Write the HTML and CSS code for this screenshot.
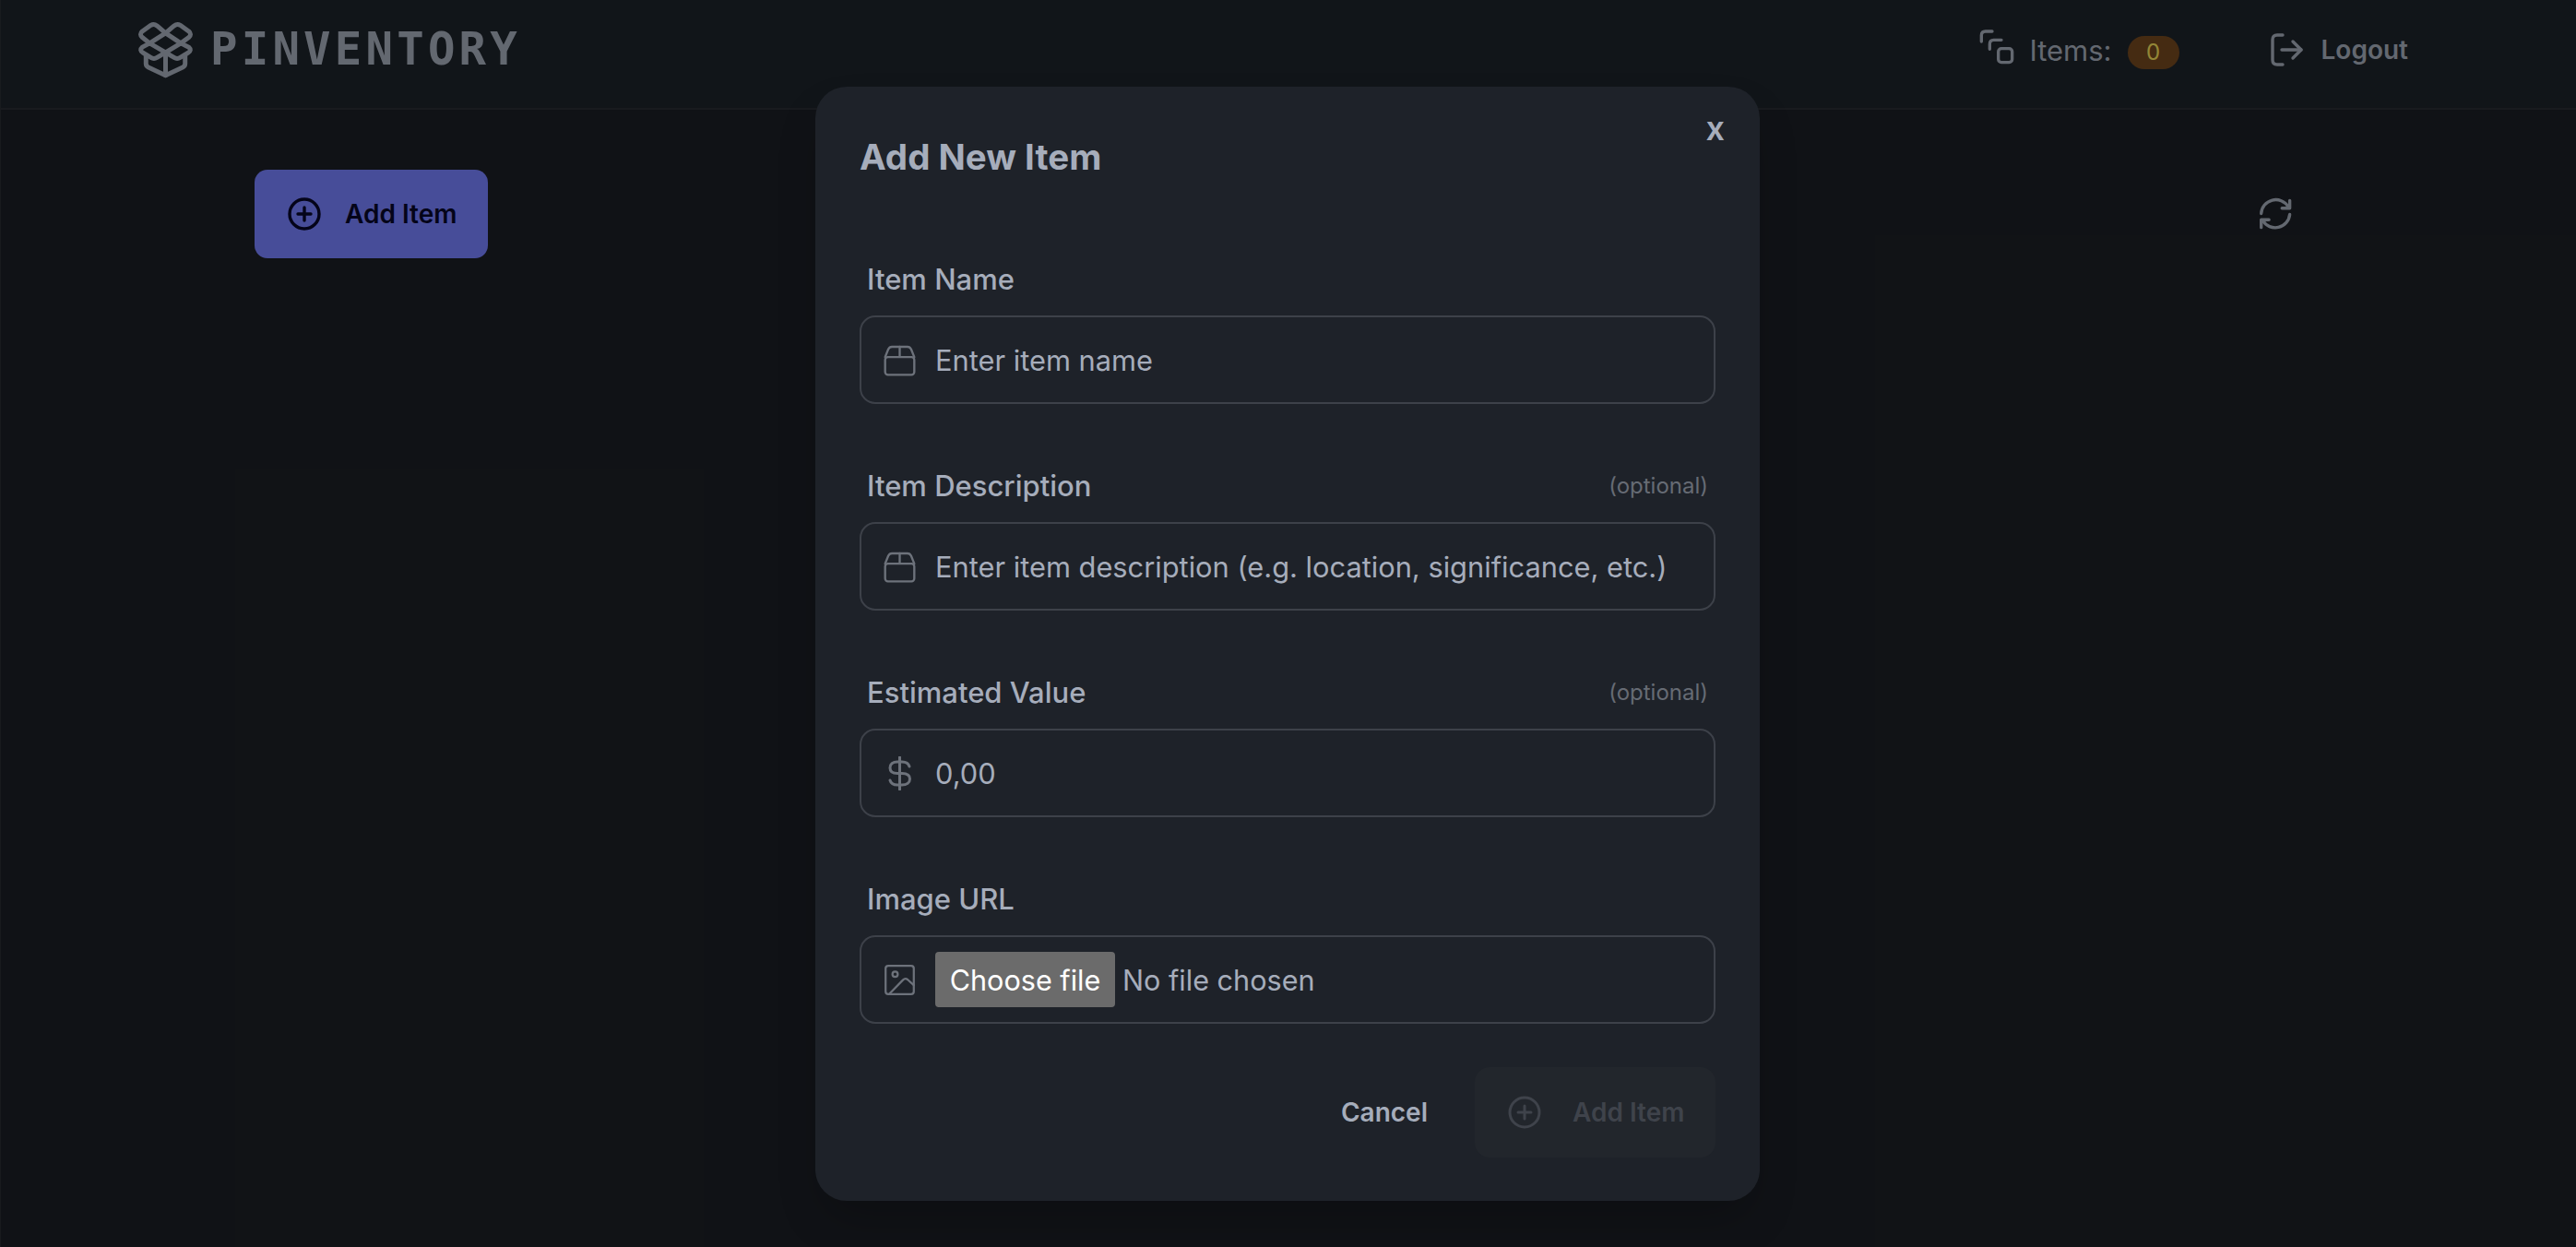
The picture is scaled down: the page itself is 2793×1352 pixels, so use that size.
FILE: index.html
```html
<!DOCTYPE html>
<html>
    <head>
        <meta charset="utf-8">
        <title>Pinventory</title>
        <link rel="stylesheet" href="styles.css">
    </head>
    <body>
        <header class="navbar">
            <div class="brand">
                <svg class="logo-icon" viewBox="25 20 190 190" fill="none" stroke="currentColor" stroke-width="15" stroke-linecap="round" stroke-linejoin="round">
                    <path d="M120 62 L170 95 L120 125 L68 95 Z"/>
                    <path d="M120 62 L92 38 Q82 30 72 36 L44 56 Q33 66 44 76 L68 95"/>
                    <path d="M120 62 L148 38 Q158 30 168 36 L196 56 Q207 66 196 76 L170 95"/>
                    <path d="M68 95 L44 108 Q33 118 46 126 L72 142 Q82 148 92 142 L120 125"/>
                    <path d="M170 95 L196 108 Q207 118 194 126 L168 142 Q158 148 148 142 L120 125"/>
                    <path d="M56 134 V162 Q56 170 64 174 L120 200 L176 174 Q184 170 184 162 V134"/>
                    <path d="M120 125 V200"/>
                </svg>
                <span class="logo-text">PINVENTORY</span>
            </div>
            <div class="nav-right">
                <div class="items-count">
                    <svg class="items-icon" viewBox="20 30 120 120" fill="none" stroke="currentColor" stroke-width="10" stroke-linecap="round">
                        <path d="M30 75 V55 Q30 42 43 42 H65"/>
                        <path d="M57 100 V83 Q57 70 70 70 H95"/>
                        <rect x="85" y="98" width="45" height="45" rx="10"/>
                    </svg>
                    <span class="items-label">Items:</span>
                    <span class="badge">0</span>
                </div>
                <div class="logout">
                    <svg class="logout-icon" viewBox="0 0 36 36" fill="none" stroke="currentColor" stroke-width="3.4" stroke-linecap="round" stroke-linejoin="round">
                        <path d="M13 2 H7 Q2 2 2 7 V29 Q2 34 7 34 H13"/>
                        <path d="M12 18 H33"/>
                        <path d="M24 9 L33 18 L24 27"/>
                    </svg>
                    <span>Logout</span>
                </div>
            </div>
        </header>

        <main class="content">
            <button class="btn-primary">
                <svg class="plus-icon" viewBox="0 0 36 36" fill="none" stroke="currentColor" stroke-width="3.4" stroke-linecap="round">
                    <circle cx="18" cy="18" r="16"/>
                    <path d="M18 11 V25 M11 18 H25"/>
                </svg>
                <span>Add Item</span>
            </button>
            <svg class="refresh-icon" viewBox="30 40 110 110" fill="none" stroke="currentColor" stroke-width="10" stroke-linecap="round" stroke-linejoin="round">
                <path d="M38 92 A47 47 0 0 1 125 70"/>
                <path d="M130 50 V75 H105"/>
                <path d="M130 95 A47 47 0 0 1 43 115"/>
                <path d="M38 137 V112 H63"/>
            </svg>
        </main>

        <div class="overlay"></div>

        <div class="modal-wrap">
            <div class="modal">
                <button class="close">x</button>
                <h2 class="modal-title">Add New Item</h2>
                <div class="fields">
                    <div class="field">
                        <div class="field-label"><span>Item Name</span></div>
                        <div class="input-box">
                            <svg class="field-icon" viewBox="20 20 110 110" fill="none" stroke="currentColor" stroke-width="7" stroke-linecap="round" stroke-linejoin="round">
                                <path d="M28 65 L38 40 Q42 32 50 32 H100 Q108 32 112 40 L122 65"/>
                                <rect x="28" y="65" width="94" height="57" rx="9"/>
                                <path d="M75 32 V63"/>
                            </svg>
                            <input type="text" placeholder="Enter item name">
                        </div>
                    </div>
                    <div class="field">
                        <div class="field-label"><span>Item Description</span><span class="optional">(optional)</span></div>
                        <div class="input-box">
                            <svg class="field-icon" viewBox="20 20 110 110" fill="none" stroke="currentColor" stroke-width="7" stroke-linecap="round" stroke-linejoin="round">
                                <path d="M28 65 L38 40 Q42 32 50 32 H100 Q108 32 112 40 L122 65"/>
                                <rect x="28" y="65" width="94" height="57" rx="9"/>
                                <path d="M75 32 V63"/>
                            </svg>
                            <input type="text" placeholder="Enter item description (e.g. location, significance, etc.)">
                        </div>
                    </div>
                    <div class="field">
                        <div class="field-label"><span>Estimated Value</span><span class="optional">(optional)</span></div>
                        <div class="input-box">
                            <svg class="field-icon" viewBox="0 0 37 37" fill="none" stroke="currentColor" stroke-width="3" stroke-linecap="round">
                                <path d="M18.5 1 V36"/>
                                <path d="M29 11 C28 7.5 25 6 21 6 H16 C11 6 8 8.5 8 12.5 C8 16.5 11 18.5 16 18.5 H21 C26 18.5 29.5 20.5 29.5 24.5 C29.5 28.5 26 31 21 31 H16 C12 31 9 29.5 8 26"/>
                            </svg>
                            <input type="text" placeholder="0,00">
                        </div>
                    </div>
                    <div class="field">
                        <div class="field-label"><span>Image URL</span></div>
                        <div class="input-box">
                            <svg class="field-icon" viewBox="20 10 115 115" fill="none" stroke="currentColor" stroke-width="7" stroke-linecap="round" stroke-linejoin="round">
                                <rect x="30" y="20" width="95" height="95" rx="9"/>
                                <circle cx="62" cy="48" r="9"/>
                                <path d="M42 115 L88 68 Q96 60 104 66 L125 85"/>
                            </svg>
                            <button class="file-btn">Choose file</button>
                            <span class="file-name">No file chosen</span>
                        </div>
                    </div>
                </div>
                <div class="modal-actions">
                    <button class="btn-cancel">Cancel</button>
                    <button class="btn-disabled">
                        <svg class="plus-icon" viewBox="0 0 36 36" fill="none" stroke="currentColor" stroke-width="3" stroke-linecap="round">
                            <circle cx="18" cy="18" r="16"/>
                            <path d="M18 11 V25 M11 18 H25"/>
                        </svg>
                        <span>Add Item</span>
                    </button>
                </div>
            </div>
        </div>
    </body>
</html>
```

FILE: styles.css
```css
* {
    box-sizing: border-box;
}

html, body {
    height: 100%;
}

body {
    margin: 0;
    overflow: hidden;
    background: #1c1f25;
    border-left: 1px solid #2b2e33;
    color: #a6adbb;
    font-family: Inter, "Liberation Sans", sans-serif;
}

button {
    font-family: inherit;
    border: none;
}

/* top bar */
.navbar {
    height: 119px;
    display: flex;
    align-items: center;
    justify-content: space-between;
    padding: 0 182px 10px 147px;
    background: #1d232a;
    border-bottom: 2px solid #2b2e35;
}

.brand {
    display: flex;
    align-items: center;
    gap: 17px;
}

.logo-icon {
    width: 63px;
    height: 63px;
}

.logo-text {
    font-family: "DejaVu Sans Mono", monospace;
    font-weight: 700;
    font-size: 49px;
    letter-spacing: 4.2px;
    line-height: 60px;
}

.nav-right {
    display: flex;
    align-items: center;
    gap: 99px;
}

.items-count {
    display: flex;
    align-items: center;
    font-size: 31px;
}

.items-icon {
    width: 40px;
    height: 40px;
    margin: 0 15px 7px 0;
}

.items-label {
    margin-top: 2px;
}

.badge {
    width: 56px;
    height: 36px;
    margin: 7px 0 0 17px;
    border-radius: 18px;
    background: #73481f;
    color: #f5e05c;
    font-size: 24px;
    line-height: 36px;
    text-align: center;
}

.logout {
    display: flex;
    align-items: center;
    gap: 19px;
    font-size: 28px;
    font-weight: 600;
}

.logout-icon {
    width: 36px;
    height: 36px;
}

/* page behind the dialog */
.content {
    display: flex;
    align-items: center;
    justify-content: space-between;
    margin-top: 65px;
    padding: 0 307px 0 275px;
}

.btn-primary {
    display: flex;
    align-items: center;
    gap: 26px;
    width: 253px;
    height: 96px;
    padding: 0 0 0 36px;
    border-radius: 14px;
    background: #7780ff;
    color: #08082a;
    font-size: 28px;
    font-weight: 600;
}

.plus-icon {
    width: 36px;
    height: 36px;
    flex: none;
}

.refresh-icon {
    width: 37px;
    height: 37px;
}

.overlay {
    position: absolute;
    inset: 0;
    background: rgba(0, 0, 0, 0.4);
}

/* dialog */
.modal-wrap {
    position: absolute;
    inset: 0;
    display: flex;
    justify-content: center;
    align-items: flex-start;
    padding: 94px 1px 0 0;
}

.modal {
    position: relative;
    width: 1024px;
    height: 1208px;
    padding: 48px;
    border-radius: 34px;
    background: #1e2229;
    box-shadow: 0 25px 50px -12px rgba(0, 0, 0, 0.25);
}

.close {
    position: absolute;
    top: 17px;
    right: 34px;
    padding: 0 4px;
    background: none;
    color: #a6adbb;
    font-size: 36px;
    font-weight: 600;
    line-height: 56px;
}

.modal-title {
    margin: 0 0 76px;
    font-size: 38.5px;
    font-weight: 700;
    line-height: 56px;
}

.fields {
    display: flex;
    flex-direction: column;
    gap: 60px;
}

.field-label {
    display: flex;
    align-items: center;
    justify-content: space-between;
    height: 56px;
    margin-bottom: 12px;
    padding: 0 8px;
    font-size: 31px;
    font-weight: 500;
}

.optional {
    color: #666b74;
    font-size: 24px;
    font-weight: 400;
}

.input-box {
    display: flex;
    align-items: center;
    height: 96px;
    padding: 0 0 0 23px;
    border: 2px solid #3d4149;
    border-radius: 17px;
}

.field-icon {
    width: 37px;
    height: 37px;
    margin-right: 20px;
    flex: none;
    color: #6d727b;
}

.input-box input {
    flex: 1;
    min-width: 0;
    height: 100%;
    padding: 0;
    border: none;
    outline: none;
    background: transparent;
    color: #a6adbb;
    font-family: inherit;
    font-size: 30.8px;
}

.input-box input::placeholder {
    color: #a6adbb;
    opacity: 1;
}

.file-btn {
    width: 195px;
    height: 60px;
    padding: 0;
    border-radius: 4px;
    background: #6b6b6b;
    color: #ffffff;
    font-size: 30.6px;
}

.file-name {
    margin-left: 8px;
    font-size: 30.6px;
}

.modal-actions {
    display: flex;
    align-items: center;
    justify-content: flex-end;
    gap: 45px;
    margin-top: 47px;
}

.btn-cancel {
    background: none;
    color: #a6adbb;
    font-size: 28px;
    font-weight: 600;
}

.btn-disabled {
    display: flex;
    align-items: center;
    gap: 34px;
    width: 261px;
    height: 98px;
    padding: 0 0 0 36px;
    border-radius: 16px;
    background: #22262c;
    color: #3f434b;
    font-size: 28px;
    font-weight: 600;
}
```
